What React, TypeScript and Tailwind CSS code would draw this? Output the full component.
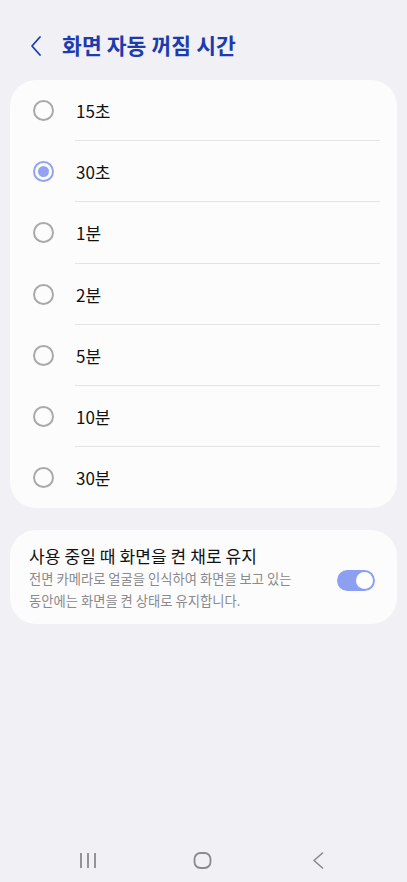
import React from "react";

const options = ["15초", "30초", "1분", "2분", "5분", "10분", "30분"];
const selected = 1;

function Radio({ on }: { on: boolean }) {
  return on ? (
    <div className="w-[21px] h-[21px] rounded-full border-[2px] border-[#93a3f2] flex items-center justify-center">
      <div className="w-[11px] h-[11px] rounded-full bg-[#93a3f2]" />
    </div>
  ) : (
    <div className="w-[21px] h-[21px] rounded-full border-[2px] border-[#a9a9ab]" />
  );
}

export default function App() {
  return (
    <div
      className="w-[407px] h-[882px] bg-[#f0f0f5] flex flex-col"
      style={{ fontFamily: '"Noto Sans CJK KR", "Noto Sans", sans-serif' }}
    >
      <div className="h-[80px] flex items-start pt-[30px] pl-[28px]">
        <svg width="16" height="22" viewBox="0 0 16 22" className="mt-[5px]">
          <path d="M12 2 L4 11 L12 20" fill="none" stroke="#1d3bb0" strokeWidth="1.8" strokeLinecap="round" strokeLinejoin="round" />
        </svg>
        <div className="ml-[18px] text-[21.5px] leading-[30px] font-bold text-[#1d3bb0] tracking-[0.1px]">
          화면 자동 꺼짐 시간
        </div>
      </div>

      <div className="mx-[10px] bg-[#fcfcfc] rounded-[26px] overflow-hidden">
        {options.map((o, i) => (
          <div key={o} className="relative h-[61.2px] flex items-center">
            <div className="w-[66px] flex justify-center pl-[1px]">
              <Radio on={i === selected} />
            </div>
            <div className="text-[17px] text-[#111] leading-none">{o}</div>
            {i < options.length - 1 && (
              <div className="absolute bottom-0 left-[65px] right-[17px] h-[1px] bg-[#e4e4e6]" />
            )}
          </div>
        ))}
      </div>

      <div className="mx-[10px] mt-[22px] bg-[#fcfcfc] rounded-[26px] pl-[19px] pr-[22px] pt-[15px] pb-[12px] flex items-center">
        <div className="flex-1">
          <div className="text-[17px] leading-[22px] text-[#111] tracking-[0.1px]">사용 중일 때 화면을 켠 채로 유지</div>
          <div className="text-[13.3px] leading-[22px] text-[#8a8a8c] mt-[1px]">
            전면 카메라로 얼굴을 인식하여 화면을 보고 있는
            <br />
            동안에는 화면을 켠 상태로 유지합니다.
          </div>
        </div>
        <div className="w-[38px] h-[21px] rounded-full bg-[#8d9ff0] relative mt-[4px]">
          <div className="absolute right-[2px] top-[2px] w-[17px] h-[17px] rounded-full bg-white" />
        </div>
      </div>

      <div className="flex-1" />

      <div className="h-[30px] flex items-start pl-[30px]">
        <div className="w-[115px] flex justify-center">
          <svg width="18" height="17" viewBox="0 0 18 17">
            <path d="M2 1 V16 M9 1 V16 M16 1 V16" stroke="#8a8a8c" strokeWidth="1.8" />
          </svg>
        </div>
        <div className="w-[115px] flex justify-center">
          <svg width="19" height="17" viewBox="0 0 19 17">
            <rect x="1.5" y="1" width="16" height="15" rx="6" fill="none" stroke="#8a8a8c" strokeWidth="1.8" />
          </svg>
        </div>
        <div className="w-[115px] flex justify-center">
          <svg width="12" height="17" viewBox="0 0 12 17">
            <path d="M10.5 1 L2 8.5 L10.5 16" fill="none" stroke="#8a8a8c" strokeWidth="1.6" strokeLinecap="round" strokeLinejoin="round" />
          </svg>
        </div>
      </div>
    </div>
  );
}
